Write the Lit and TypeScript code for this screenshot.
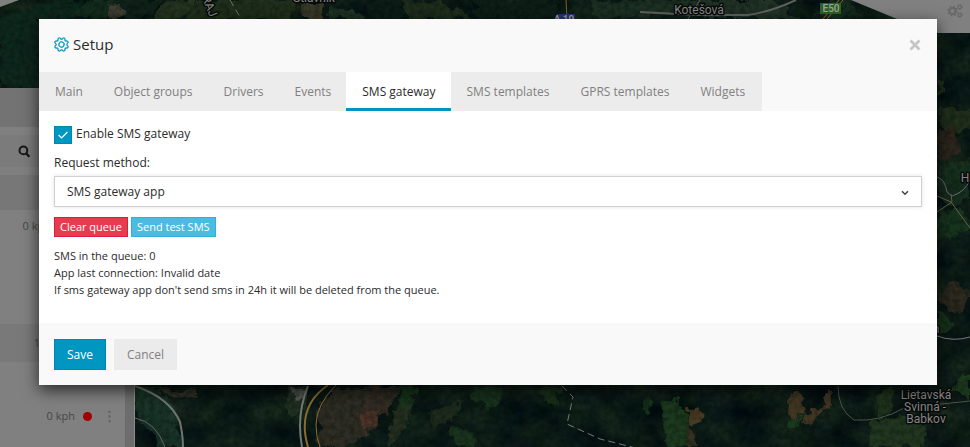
import { LitElement, html, svg, css } from "lit";
import { customElement, state } from "lit/decorators.js";

type Patch = [points: string, fill: string];

const fields: Patch[] = [
  ["85,0 120,0 110,19 70,19", "#16301f"],
  ["106,4 122,6 124,14 112,19", "#4b4638"],
  ["170,0 200,0 190,12 165,19 150,19", "#2b3b24"],
  ["202,0 300,0 290,19 180,19", "#26361f"],
  ["300,4 320,2 325,19 305,19", "#46432f"],
  ["330,8 352,10 366,19 330,19", "#243a27"],
  ["400,0 440,2 472,16 460,19 410,19", "#23331f"],
  ["590,2 640,0 700,0 690,12 600,19", "#203626"],
  ["696,0 770,0 800,19 700,19", "#28392b"],
  ["830,0 850,2 862,19 815,19", "#1a3020"],
  ["938,78 946,80 945,92 937,92", "#243a1e"],
  ["941,105 970,112 970,128 950,132 938,118", "#26341f"],
  ["938,128 955,130 962,150 945,162 937,150", "#33281f"],
  ["937,165 970,160 970,196 950,206 937,196", "#1a3421"],
  ["937,212 962,206 970,230 948,238 937,230", "#1a3a20"],
  ["944,292 952,282 968,290 968,305 958,314 940,300", "#332d21"],
  ["937,312 950,316 954,330 937,334", "#1b3a1e"],
  ["135,386 150,386 172,400 183,447 160,447 150,428 135,420", "#1d3a2d"],
  ["155,388 200,390 200,398 170,396", "#39382b"],
  ["288,386 306,386 300,420 287,416", "#273626"],
  ["292,388 304,390 300,402 293,398", "#63665f"],
  ["332,390 385,386 404,386 372,432 340,447 318,447 320,405", "#343126"],
  ["364,398 376,386 395,394 386,414 368,430 352,420", "#3c3227"],
  ["362,414 380,410 377,422 366,434", "#5b3a2c"],
  ["398,400 416,386 410,420 392,447 386,447", "#2a3421"],
  ["402,386 418,386 412,402 398,408", "#1b3c1e"],
  ["430,412 462,398 456,418 430,430", "#22301e"],
  ["472,387 505,387 500,402 488,410 470,400", "#1c3920"],
  ["450,428 476,432 474,447 458,447", "#1e3a20"],
  ["542,387 562,387 556,406 545,402", "#1d371c"],
  ["646,394 654,400 648,416 642,408", "#1a371e"],
  ["662,403 678,398 690,420 688,447 666,447", "#20401f"],
  ["687,409 699,408 705,422 692,426", "#534126"],
  ["686,428 692,428 696,447 684,447", "#3a3622"],
  ["786,400 798,394 806,400 803,414 789,418", "#513f27"],
  ["803,414 824,404 826,391 832,391 829,404 810,428 802,424", "#4d3d26"],
  ["790,418 802,415 798,428 787,426", "#1d421f"],
  ["875,394 892,386 896,408 880,420", "#24381e"],
  ["872,422 910,412 928,432 920,447 870,447", "#253c21"],
  ["950,392 965,373 970,378 970,398", "#21401f"],
];

const forests: Patch[] = [
  ["0,20 39,2 39,88 0,88", "#0f2b20"],
  ["39,3 84,0 72,19 39,19", "#0e2a1e"],
  ["120,0 166,0 145,19 124,19", "#12261c"],
  ["360,0 400,0 405,19 375,19", "#0e1f18"],
  ["470,0 560,0 555,19 480,19", "#102219"],
];

const lines = [
  { d: "M135 386 Q170 398 180 422 Q183 436 183 447", stroke: "#6f7470", w: 2 },
  { d: "M308 386 Q296 415 302 447", stroke: "#737873", w: 2 },
  { d: "M328 385 Q296 407 308 447", stroke: "#8a6a2d", w: 2 },
  { d: "M336 385 Q316 405 316 425 Q316 437 320 447", stroke: "#8a6a2d", w: 1 },
  { d: "M562 386 L573 397 L567 424 L600 439 L640 449", stroke: "#777", w: 1, dash: "7 4" },
  { d: "M838 386 Q838 410 854 420 Q880 422 904 408 L970 401", stroke: "#4c5249", w: 1 },
  { d: "M937 177 Q945 179 947 192 L952 196 Q965 192 970 180", stroke: "#656a67", w: 1 },
  { d: "M937 196 L951 202 L970 228 M937 212 L952 202 L951 194", stroke: "#6b5e50", w: 1 },
  { d: "M937 336 Q953 342 970 337", stroke: "#777b78", w: 1 },
  { d: "M640 12 Q675 14 696 15 L748 15 Q770 12 796 0", stroke: "#5e615e", w: 2 },
  { d: "M700 0 L688 19", stroke: "#5e615e", w: 1 },
  { d: "M230 0 L240 17", stroke: "#6b706d", w: 1, dash: "7 4" },
  { d: "M566 0 L567 19", stroke: "#80602c", w: 1 },
  { d: "M839 0 L823 19 M843 0 L827 19", stroke: "#8a6a2d", w: 1 },
  { d: "M135 418 Q156 422 165 447", stroke: "#5c635f", w: 1 },
];

const tabs = [
  "Main",
  "Object groups",
  "Drivers",
  "Events",
  "SMS gateway",
  "SMS templates",
  "GPRS templates",
  "Widgets",
];

@customElement("map-view")
class MapView extends LitElement {
  static styles = css`
    :host {
      display: block;
    }
    svg {
      display: block;
      width: 100%;
      height: 100%;
    }
    .place {
      font: 12px Roboto, sans-serif;
      fill: #858585;
      stroke: #080b09;
      stroke-width: 3px;
      paint-order: stroke;
      stroke-linejoin: round;
      text-anchor: middle;
    }
    .road {
      font: 500 10px Roboto, sans-serif;
      fill: #a0a0a0;
      text-anchor: middle;
    }
  `;

  render() {
    return html`<svg viewBox="0 0 970 447" preserveAspectRatio="xMidYMid slice" aria-label="Map">
      <defs>
        <filter id="terrain" x="0" y="0" width="100%" height="100%" color-interpolation-filters="sRGB">
          <feTurbulence type="fractalNoise" baseFrequency="0.03 0.04" numOctaves="5" seed="8" />
          <feColorMatrix
            type="matrix"
            values="0.14 0.02 0 0 -0.03  0.17 0.05 0 0 0  0.08 0 0.04 0 0.03  0 0 0 0 1"
          />
        </filter>
        <filter id="edges" x="0" y="0" width="100%" height="100%" color-interpolation-filters="sRGB">
          <feTurbulence type="fractalNoise" baseFrequency="0.09" numOctaves="4" seed="3" />
          <feDisplacementMap in="SourceGraphic" scale="14" xChannelSelector="R" yChannelSelector="G" />
          <feGaussianBlur stdDeviation="0.7" />
        </filter>
        <filter id="grain" x="0" y="0" width="100%" height="100%" color-interpolation-filters="sRGB">
          <feTurbulence type="fractalNoise" baseFrequency="0.2" numOctaves="3" seed="5" />
          <feColorMatrix type="matrix" values="0 0 0 0 0  0 0 0 0 0.02  0 0 0 0 0.02  1.6 0 0 0 -0.5" />
        </filter>
      </defs>
      <rect width="970" height="447" filter="url(#terrain)" />
      <g filter="url(#edges)" opacity="0.85">
        <rect width="970" height="447" fill="none" />
        ${[...forests, ...fields].map(([p, f]) => svg`<polygon points=${p} fill=${f} />`)}
      </g>
      <rect width="970" height="447" filter="url(#grain)" opacity="0.4" />
      <g fill="none">
        ${lines.map(
          (l) => svg`<path d=${l.d} stroke=${l.stroke} stroke-width=${l.w} stroke-dasharray=${l.dash ?? "none"} />`,
        )}
      </g>
      <path d="M0 0H19L0 7Z" fill="#808080" />
      <path d="M851 0H970V33H937L897 19Z" fill="#808080" />
      <text class="place" x="699" y="14">Kotešová</text>
      <text class="place" x="314" y="2">Štiavnik</text>
      <text class="place" transform="translate(200 -7) rotate(68)" x="12" y="0">KRAJ</text>
      <text class="place" x="965" y="182">H</text>
      <text class="place" x="936" y="333">n</text>
      <text class="place" x="926" y="399">Lietavská</text>
      <text class="place" x="925" y="411">Svinná -</text>
      <text class="place" x="926" y="423">Babkov</text>
      <rect x="820" y="3" width="21" height="11" fill="#2b6420" />
      <text class="road" x="831" y="12">E50</text>
      <rect x="557" y="14" width="18" height="8" fill="#26336f" />
      <text class="road" x="564" y="23">A 19</text>
    </svg>`;
  }
}

@customElement("object-panel")
class ObjectPanel extends LitElement {
  static styles = css`
    :host {
      display: flex;
      box-sizing: border-box;
      width: 135px;
      background: #808080;
      border-right: 1px solid #8c8c8c;
      font: 11px/16px "Open Sans", sans-serif;
      color: #474747;
    }
    .list {
      flex: 1;
      display: flex;
      flex-direction: column;
    }
    .head {
      height: 39px;
      background: #737373;
    }
    .search {
      display: flex;
      align-items: center;
      height: 32px;
      margin: 8px 0;
      padding-left: 18px;
      background: #7b7b7b;
    }
    .group {
      height: 35px;
      background: #777;
    }
    .row {
      display: flex;
      align-items: center;
      justify-content: flex-end;
      gap: 14px;
      height: 32px;
    }
    .moving {
      padding-right: 74px;
    }
    .space {
      height: 82px;
    }
    .count {
      height: 38px;
      padding-right: 85px;
      background: #797979;
    }
    .last {
      margin-top: 38px;
      padding-right: 14px;
      gap: 8px;
    }
    .dot {
      width: 9px;
      height: 9px;
      border-radius: 50%;
      background: #a00000;
      margin-right: 8px;
    }
    .bar {
      width: 9px;
      background: #6d6d6d;
    }
  `;

  render() {
    return html`<div class="list">
        <div class="head"></div>
        <div class="search">
          <svg width="13" height="13" viewBox="0 0 13 13" fill="none" stroke="#161616" stroke-width="2">
            <circle cx="5.4" cy="5.4" r="3.9" />
            <path d="M8 8.2L11.4 11.8" stroke-width="2.4" />
          </svg>
        </div>
        <div class="group"></div>
        <div class="row moving">0 kph</div>
        <div class="space"></div>
        <div class="row count">1</div>
        <div class="row last">
          <span>0 kph</span>
          <span class="dot"></span>
          <svg width="3" height="13" viewBox="0 0 3 13" fill="#686868">
            <circle cx="1.5" cy="1.8" r="1.4" />
            <circle cx="1.5" cy="6.5" r="1.4" />
            <circle cx="1.5" cy="11.2" r="1.4" />
          </svg>
        </div>
      </div>
      <div class="bar"></div>`;
  }
}

@customElement("app-root")
class AppRoot extends LitElement {
  @state() private active = "SMS gateway";

  static styles = css`
    :host {
      display: block;
      position: relative;
      min-height: 100vh;
      overflow: hidden;
      font: 12px/18px "Open Sans", sans-serif;
      color: #2b2b2b;
    }
    * {
      box-sizing: border-box;
    }
    button,
    select {
      font: inherit;
      border-radius: 0;
      margin: 0;
    }
    .map {
      position: absolute;
      inset: 0;
    }
    .side {
      position: absolute;
      top: 88px;
      bottom: 0;
      left: 0;
    }
    .tools {
      position: absolute;
      top: 4px;
      right: 7px;
    }
    .modal {
      position: relative;
      margin: 19px 33px 62px 39px;
      background: #fff;
      box-shadow: 0 5px 15px rgba(0, 0, 0, 0.7);
    }
    .top {
      background: #f9f9f9;
    }
    header {
      display: flex;
      align-items: center;
      justify-content: space-between;
      height: 53px;
      padding: 0 16px 2px 15px;
    }
    h1 {
      display: flex;
      align-items: center;
      gap: 4px;
      margin: 0;
      font-size: 15px;
      line-height: 21px;
      font-weight: 400;
    }
    .close {
      display: flex;
      padding: 0;
      border: 0;
      background: none;
    }
    nav {
      display: flex;
      width: fit-content;
      padding-right: 2px;
      background: #ececec;
    }
    .tab {
      height: 39px;
      padding: 0 15px 0 16px;
      border: 0;
      background: none;
      color: #808080;
      white-space: nowrap;
    }
    .tab.on {
      background: #fff;
      color: #2b2b2b;
      box-shadow: inset 0 -3px #0096c2;
    }
    .body {
      padding: 14px 15px 25px;
    }
    .check {
      display: flex;
      align-items: flex-start;
      gap: 4px;
      width: fit-content;
    }
    .box {
      display: grid;
      place-items: center;
      margin-top: 1px;
    }
    .box > * {
      grid-area: 1 / 1;
    }
    .box input {
      appearance: none;
      width: 18px;
      height: 18px;
      margin: 0;
      border: 1px solid #0087b0;
      background: #fff;
    }
    .box input:checked {
      background: #0096c2;
    }
    .box svg,
    .pick svg {
      pointer-events: none;
    }
    .label {
      display: block;
      margin: 10px 0 4px;
    }
    .pick {
      display: grid;
      align-items: center;
    }
    .pick > * {
      grid-area: 1 / 1;
    }
    .pick svg {
      justify-self: end;
      margin-right: 13px;
      margin-top: 2px;
    }
    select {
      appearance: none;
      width: 100%;
      height: 31px;
      padding: 0 12px;
      border: 1px solid #d0d0d0;
      background: #fff;
      color: inherit;
      box-shadow: 0 0 4px rgba(0, 0, 0, 0.12);
    }
    .actions {
      display: flex;
      gap: 3px;
      margin: 10px 0;
    }
    .small {
      height: 20px;
      padding: 0 5px;
      font-size: 11px;
      line-height: 16px;
      color: #fff;
    }
    .danger {
      background: #e63c50;
      border: 1px solid #dc1e3c;
    }
    .info {
      background: #4bbbe0;
      border: 1px solid #32aedb;
    }
    .status {
      margin: 0;
      font-size: 11px;
      line-height: 17px;
    }
    footer {
      display: flex;
      gap: 8px;
      padding: 16px 15px 15px;
      background: #f9f9f9;
    }
    .btn {
      height: 31px;
      padding: 0 12px;
      border: 1px solid #ebebeb;
      background: #ebebeb;
      color: #808080;
    }
    .primary {
      border-color: #0087b0;
      background: #0096c2;
      color: #fff;
    }
  `;

  render() {
    return html`
      <map-view class="map"></map-view>
      <object-panel class="side"></object-panel>
      <svg class="tools" width="16" height="15" viewBox="0 0 16 15" fill="none" stroke="#696969">
        <circle cx="5.5" cy="7" r="3" stroke-width="2" />
        <circle cx="5.5" cy="7" r="4.6" stroke-width="1.6" stroke-dasharray="1.8 1.81" />
        <circle cx="12.8" cy="3" r="1.6" stroke-width="1.2" />
        <circle cx="12.8" cy="3" r="2.5" stroke-dasharray="1 .96" />
        <circle cx="12.8" cy="11" r="1.6" stroke-width="1.2" />
        <circle cx="12.8" cy="11" r="2.5" stroke-dasharray="1 .96" />
      </svg>
      <section class="modal" role="dialog" aria-labelledby="title">
        <div class="top">
          <header>
            <h1 id="title">
              <svg width="15" height="15" viewBox="0 0 16 16" fill="#0096c2" stroke="#0096c2" stroke-width=".3">
                <g transform="rotate(22.5 8 8)">
                  <path
                    d="M8 4.754a3.246 3.246 0 1 0 0 6.492 3.246 3.246 0 0 0 0-6.492zM5.754 8a2.246 2.246 0 1 1 4.492 0 2.246 2.246 0 0 1-4.492 0z"
                  />
                  <path
                    d="M9.796 1.343c-.527-1.79-3.065-1.79-3.592 0l-.094.319a.873.873 0 0 1-1.255.52l-.292-.16c-1.64-.892-3.433.902-2.54 2.541l.159.292a.873.873 0 0 1-.52 1.255l-.319.094c-1.79.527-1.79 3.065 0 3.592l.319.094a.873.873 0 0 1 .52 1.255l-.16.292c-.892 1.64.901 3.434 2.541 2.54l.292-.159a.873.873 0 0 1 1.255.52l.094.319c.527 1.79 3.065 1.79 3.592 0l.094-.319a.873.873 0 0 1 1.255-.52l.292.16c1.64.893 3.434-.902 2.54-2.541l-.159-.292a.873.873 0 0 1 .52-1.255l.319-.094c1.79-.527 1.79-3.065 0-3.592l-.319-.094a.873.873 0 0 1-.52-1.255l.16-.292c.893-1.64-.902-3.433-2.541-2.54l-.292.159a.873.873 0 0 1-1.255-.52l-.094-.319zm-2.633.283c.246-.835 1.428-.835 1.674 0l.094.319a1.873 1.873 0 0 0 2.693 1.115l.291-.16c.764-.415 1.6.42 1.184 1.185l-.159.292a1.873 1.873 0 0 0 1.116 2.692l.318.094c.835.246.835 1.428 0 1.674l-.319.094a1.873 1.873 0 0 0-1.115 2.693l.16.291c.415.764-.42 1.6-1.185 1.184l-.291-.159a1.873 1.873 0 0 0-2.693 1.116l-.094.318c-.246.835-1.428.835-1.674 0l-.094-.319a1.873 1.873 0 0 0-2.692-1.115l-.292.16c-.764.415-1.6-.42-1.184-1.185l.159-.291A1.873 1.873 0 0 0 1.945 8.93l-.319-.094c-.835-.246-.835-1.428 0-1.674l.319-.094A1.873 1.873 0 0 0 3.06 4.377l-.16-.292c-.415-.764.42-1.6 1.185-1.184l.292.159a1.873 1.873 0 0 0 2.692-1.115l.094-.319z"
                  />
                </g>
              </svg>
              Setup
            </h1>
            <button class="close" aria-label="Close">
              <svg width="12" height="12" viewBox="0 0 12 12" stroke="#c6c6c6" stroke-width="2.8">
                <path d="M1.5 1.5l9 9M10.5 1.5l-9 9" />
              </svg>
            </button>
          </header>
          <nav role="tablist">
            ${tabs.map(
              (t) => html`<button
                role="tab"
                class="tab ${t === this.active ? "on" : ""}"
                aria-selected=${t === this.active}
                @click=${() => (this.active = t)}
              >${t}</button>`,
            )}
          </nav>
        </div>
        <div class="body">
          <label class="check">
            <span class="box">
              <input type="checkbox" checked />
              <svg width="10" height="8" viewBox="0 0 10 8" fill="none" stroke="#fff" stroke-width="1.2">
                <path d="M.6 4l3 3L9.4 1" />
              </svg>
            </span>
            Enable SMS gateway
          </label>
          <label class="label" for="method">Request method:</label>
          <div class="pick">
            <select id="method">
              <option>SMS gateway app</option>
            </select>
            <svg width="8" height="6" viewBox="0 0 8 6" fill="none" stroke="#444" stroke-width="1.5">
              <path d="M1 1.2l3 3 3-3" />
            </svg>
          </div>
          <div class="actions">
            <button class="small danger">Clear queue</button>
            <button class="small info">Send test SMS</button>
          </div>
          <p class="status">SMS in the queue: 0</p>
          <p class="status">App last connection: Invalid date</p>
          <p class="status">If sms gateway app don't send sms in 24h it will be deleted from the queue.</p>
        </div>
        <footer>
          <button class="btn primary">Save</button>
          <button class="btn">Cancel</button>
        </footer>
      </section>
    `;
  }
}
